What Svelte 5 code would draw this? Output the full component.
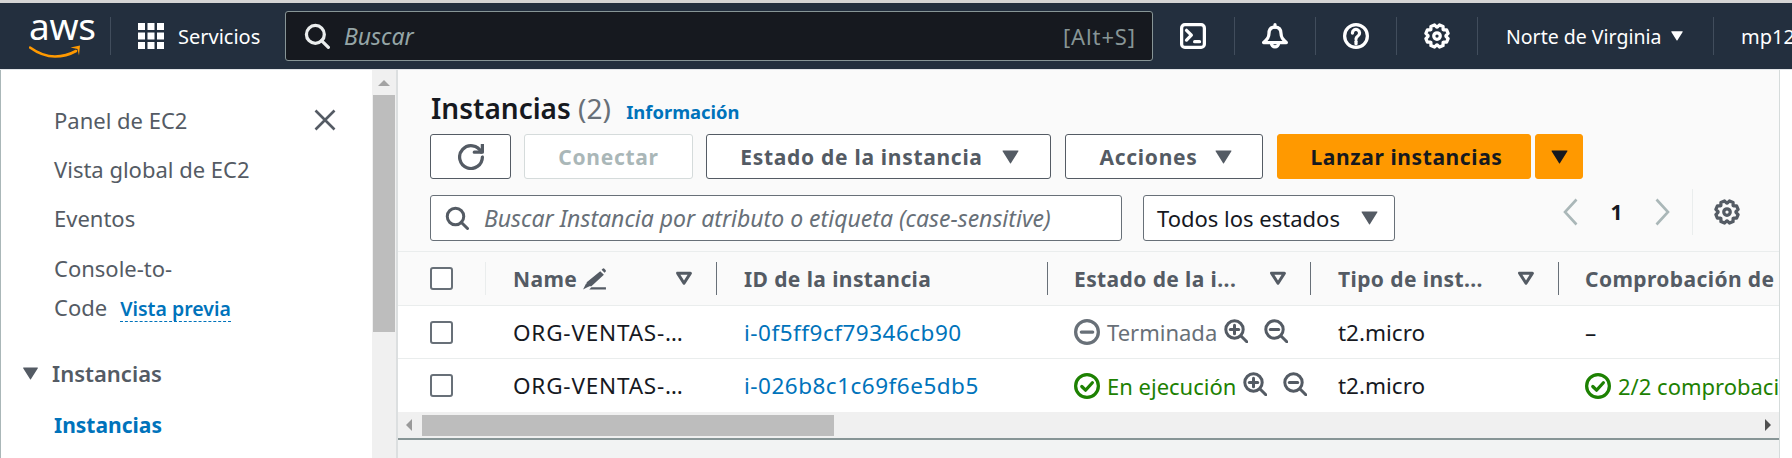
<script lang="ts">
	const rows = [
		{
			name: 'ORG-VENTAS-…',
			id: 'i-0f5ff9cf79346cb90',
			state: 'Terminada',
			stateClass: 'ended',
			checks: '–'
		},
		{
			name: 'ORG-VENTAS-…',
			id: 'i-026b8c1c69f6e5db5',
			state: 'En ejecución',
			stateClass: 'running',
			checks: '2/2 comprobaciones superadas'
		}
	];

	// eight tooth cog, same outline for both settings icons
	function gearPath(): string {
		const pts: string[] = [];
		for (let i = 0; i < 8; i++) {
			const a = (i * Math.PI) / 4 + Math.PI / 8;
			for (const [off, r] of [[-0.36, 5.5], [-0.17, 7], [0.17, 7], [0.36, 5.5]]) {
				const x = 8 + r * Math.cos(a + off);
				const y = 8 + r * Math.sin(a + off);
				pts.push(`${x.toFixed(2)} ${y.toFixed(2)}`);
			}
		}
		return 'M' + pts.join('L') + 'Z';
	}
	const gear = gearPath();
</script>

{#snippet gearIcon()}
	<svg class="ic" viewBox="0 0 16 16"><path d={gear} /><circle cx="8" cy="8" r="2" /></svg>
{/snippet}

{#snippet searchIcon()}
	<svg class="ic" viewBox="0 0 16 16"><circle cx="7" cy="7" r="5.5" /><path d="m15 15-4.2-4.2" /></svg>
{/snippet}

{#snippet caret(cls = '')}
	<svg class="caret {cls}" viewBox="0 0 16 14"><path d="M0.5 0.5h15a.5.5 0 0 1 .4.8L8.4 13.2a.5.5 0 0 1-.8 0L.1 1.3a.5.5 0 0 1 .4-.8Z" /></svg>
{/snippet}

{#snippet sortIcon()}
	<svg class="sort" viewBox="0 0 16 14"><path d="M2 2h12L8 11.5Z" /></svg>
{/snippet}

{#snippet zoomIcon(plus = false)}
	<svg class="ic zoom" viewBox="0 0 16 16">
		<circle cx="7" cy="7" r="5.8" />
		<path d="m15.2 15.2-4-4" />
		<path d="M4.2 7h5.6" />
		{#if plus}<path d="M7 4.2v5.6" />{/if}
	</svg>
{/snippet}

<div class="page">
	<header class="nav">
		<div class="logo">
			<span class="aws">aws</span>
			<svg class="smile" viewBox="0 0 52 16">
				<path class="arc" d="M1 3.5C10 10 18 12.5 26 12.5c7 0 14-1.600 21-5.500" />
				<path class="tip" d="M41.500 3.500 51 1.500 50 11.500 48.500 5Z" />
			</svg>
		</div>
		<span class="sep"></span>
		<div class="services">
			<svg class="grid-ic" viewBox="0 0 26 26">
				{#each [0, 9.5, 19] as y}
					{#each [0, 9.5, 19] as x}
						<rect {x} {y} width="7" height="7" />
					{/each}
				{/each}
			</svg>
			<span>Servicios</span>
		</div>
		<div class="nav-search">
			{@render searchIcon()}
			<span class="ph">Buscar</span>
			<span class="shortcut">[Alt+S]</span>
		</div>
		<div class="tool first">
			<svg class="ic" viewBox="0 0 16 16"><rect x="1" y="1" width="14" height="14" rx="2" /><path d="m4 4.500 3 3-3 3" /><path d="M9 11.500h3" /></svg>
		</div>
		<span class="sep"></span>
		<div class="tool">
			<svg class="ic" viewBox="0 0 16 16"><path d="M8 2.500c-2.500 0-3.700 1.700-3.700 4 0 2.300-1.300 4-3.300 5.500h14c-2-1.500-3.300-3.200-3.300-5.500 0-2.300-1.200-4-3.700-4Z" /><path d="M8 1v1.500" /><path d="M5.800 12.500a2.200 2.200 0 0 0 4.400 0" /></svg>
		</div>
		<span class="sep"></span>
		<div class="tool">
			<svg class="ic" viewBox="0 0 16 16"><circle cx="8" cy="8" r="7" /><path d="M5.800 6.200a2.200 2.200 0 1 1 3.400 1.800C8.400 8.500 8 9 8 9.800" /><path d="M8 11.300v1.500" /></svg>
		</div>
		<span class="sep"></span>
		<div class="tool">{@render gearIcon()}</div>
		<span class="sep"></span>
		<div class="region">
			<span>Norte de Virginia</span>
			{@render caret('small')}
		</div>
		<span class="sep"></span>
		<span class="user">mp12</span>
	</header>

	<div class="body">
		<aside class="side">
			<div class="side-top">
				<a class="link" href="#a">Panel de EC2</a>
				<svg class="close" viewBox="0 0 22 22"><path d="m1.500 1.500 19 19M20.500 1.500l-19 19" /></svg>
			</div>
			<a class="link" href="#a">Vista global de EC2</a>
			<a class="link events" href="#a">Eventos</a>
			<div class="link stack">
				<span>Console-to-</span>
				<span class="code">Code <span class="preview">Vista previa</span></span>
			</div>
			<div class="section">
				{@render caret('side-caret')}
				<span>Instancias</span>
			</div>
			<a class="link active" href="#a">Instancias</a>
		</aside>

		<div class="vbar">
			<svg class="arrow-up" viewBox="0 0 12 6"><path d="M6 0 12 6H0Z" /></svg>
			<div class="vthumb"></div>
		</div>

		<main class="main">
			<div class="panel">
				<h1><strong>Instancias</strong> <span class="count">(2)</span> <a class="info" href="#a">Información</a></h1>

				<div class="actions">
					<button class="btn refresh" aria-label="Actualizar">
						<svg class="ic" viewBox="0 0 16 16"><path d="M10 5h5V0" /><path d="M15 8a7 7 0 1 1-.7-3" /></svg>
					</button>
					<button class="btn connect" disabled>Conectar</button>
					<button class="btn state">Estado de la instancia {@render caret()}</button>
					<button class="btn acts">Acciones {@render caret()}</button>
					<div class="launch">
						<button class="btn primary">Lanzar instancias</button>
						<button class="btn primary more" aria-label="Más">{@render caret('dark')}</button>
					</div>
				</div>

				<div class="filters">
					<div class="filter">
						{@render searchIcon()}
						<span>Buscar Instancia por atributo o etiqueta (case-sensitive)</span>
					</div>
					<div class="select">
						<span>Todos los estados</span>
						{@render caret()}
					</div>
					<div class="pager">
						<svg class="chev" viewBox="0 0 15 28"><path d="M13.500 1.500 2 14l11.500 12.500" /></svg>
						<span class="num">1</span>
						<svg class="chev" viewBox="0 0 15 28"><path d="M1.500 1.500 13 14 1.500 26.500" /></svg>
					</div>
					<div class="pref">{@render gearIcon()}</div>
				</div>
			</div>

			<div class="table">
				<div class="row head">
					<div class="cell check"><span class="box"></span></div>
					<div class="cell th">
						Name
						<svg class="pencil" viewBox="0 0 24 21">
							<path d="M17.500 3.500 21 7 9 18H4.500V14Z M18.800 2.200l1-1a1.200 1.200 0 0 1 1.700 0l1.100 1.100a1.200 1.200 0 0 1 0 1.700l-1 1Z" />
							<path d="M1 21l3-6 3 3Z" />
							<path d="M9 19h14v2H7Z" />
						</svg>
						<span class="end">{@render sortIcon()}</span>
					</div>
					<div class="cell th">ID de la instancia</div>
					<div class="cell th tight">Estado de la i... <span class="end">{@render sortIcon()}</span></div>
					<div class="cell th">Tipo de inst... <span class="end">{@render sortIcon()}</span></div>
					<div class="cell th tight">Comprobación de estado</div>
				</div>
				{#each rows as r}
					<div class="row">
						<div class="cell check"><span class="box"></span></div>
						<div class="cell name">{r.name}</div>
						<div class="cell"><a class="id" href="#a">{r.id}</a></div>
						<div class="cell tight status {r.stateClass}">
							{#if r.stateClass === 'ended'}
								<svg class="ic st" viewBox="0 0 16 16"><circle cx="8" cy="8" r="7" /><path d="M4.500 8h7" /></svg>
							{:else}
								<svg class="ic st" viewBox="0 0 16 16"><circle cx="8" cy="8" r="7" /><path d="m4.800 8.300 2.300 2.300 4.200-4.600" /></svg>
							{/if}
							<span class="st-text">{r.state}</span>
							<span class="zooms">
								{@render zoomIcon(true)}
								{@render zoomIcon(false)}
							</span>
						</div>
						<div class="cell">t2.micro</div>
						<div class="cell tight">
							{#if r.stateClass === 'running'}
								<span class="status running">
									<svg class="ic st" viewBox="0 0 16 16"><circle cx="8" cy="8" r="7" /><path d="m4.800 8.300 2.300 2.300 4.200-4.600" /></svg>
									<span class="st-text">{r.checks}</span>
								</span>
							{:else}
								{r.checks}
							{/if}
						</div>
					</div>
				{/each}
				<div class="hbar">
					<svg class="arrow-h" viewBox="0 0 6 12"><path d="M6 0v12L0 6Z" /></svg>
					<div class="hthumb"></div>
					<svg class="arrow-h right" viewBox="0 0 6 12"><path d="M0 0v12l6-6Z" /></svg>
				</div>
			</div>
			<div class="foot"></div>
		</main>
		<div class="gutter"></div>
	</div>
</div>

<style>
	:global(body) {
		margin: 0;
		background: #fff;
		font-family: 'Noto Sans', sans-serif;
	}

	.page {
		width: 1792px;
		height: 458px;
		overflow: hidden;
		display: flex;
		flex-direction: column;
		border-top: 3px solid #d5d5d5;
		box-sizing: border-box;
	}

	a { text-decoration: none; color: inherit; }

	.ic {
		width: 26px;
		height: 26px;
		fill: none;
		stroke: currentColor;
		stroke-width: 2;
		stroke-linejoin: round;
		stroke-linecap: round;
		flex-shrink: 0;
		display: block;
	}

	.caret {
		width: 17px;
		height: 14px;
		fill: currentColor;
		flex-shrink: 0;
		display: inline-block;
	}
	.caret.small { width: 14px; height: 10px; }
	.caret.side-caret { width: 17px; height: 13px; }
	.caret.dark { color: #16191f; }

	/* top nav */
	.nav {
		height: 67px;
		flex-shrink: 0;
		background: #232f3e;
		color: #fff;
		display: flex;
		align-items: center;
		white-space: nowrap;
		overflow: hidden;
		font-size: 20px;
		border-bottom: 1px solid #e2e5e8;
		box-sizing: border-box;
	}

	.logo {
		width: 110px;
		padding-left: 29px;
		box-sizing: border-box;
		height: 50px;
		flex-shrink: 0;
	}
	.aws {
		display: block;
		font-size: 37px;
		line-height: 40px;
		letter-spacing: -0.3px;
		margin-top: -5px;
	}
	.smile {
		display: block;
		width: 52px;
		height: 16px;
		margin-top: -2px;
	}
	.arc { fill: none; stroke: #f90; stroke-width: 2.600; stroke-linecap: round; }
	.tip { fill: #f90; }

	.sep {
		width: 1px;
		height: 38px;
		background: #414d5c;
		flex-shrink: 0;
	}

	.services {
		width: 174px;
		padding-left: 27px;
		box-sizing: border-box;
		display: flex;
		align-items: center;
		gap: 14px;
		flex-shrink: 0;
	}
	.grid-ic { width: 26px; height: 26px; fill: #fff; }

	.nav-search {
		width: 868px;
		height: 50px;
		box-sizing: border-box;
		border: 1px solid #879596;
		border-radius: 3px;
		background: #16191f;
		display: flex;
		align-items: center;
		padding: 0 16px 0 18px;
		gap: 14px;
		color: #eaeded;
		flex-shrink: 0;
	}
	.nav-search .ph { flex: 1; font-style: italic; font-size: 23px; color: #95a5a6; }
	.nav-search .shortcut { font-size: 22px; letter-spacing: 0.9px; color: #879596; }

	.tool {
		width: 80px;
		display: flex;
		justify-content: center;
		flex-shrink: 0;
	}
	.tool.first { width: 81px; padding-right: 2px; box-sizing: border-box; }

	.region {
		width: 235px;
		padding-left: 28px;
		box-sizing: border-box;
		display: flex;
		align-items: center;
		gap: 9px;
		flex-shrink: 0;
		font-size: 19.500px;
	}
	.user { padding-left: 27px; }

	/* layout */
	.body {
		flex: 1;
		display: flex;
		min-height: 0;
		border-left: 1px solid #aab7b8;
	}

	.side {
		width: 371px;
		flex-shrink: 0;
		background: #fff;
		box-sizing: border-box;
		padding: 36px 0 0 53px;
		display: flex;
		flex-direction: column;
		color: #545b64;
		font-size: 22px;
		line-height: 28px;
	}
	.link { display: block; margin-bottom: 21px; }
	.link.events { margin-bottom: 22px; }
	.side-top {
		display: flex;
		justify-content: space-between;
		align-items: flex-start;
		padding-right: 36px;
	}
	.close {
		width: 22px;
		height: 22px;
		margin-top: 3px;
		fill: none;
		stroke: #545b64;
		stroke-width: 2.600;
	}
	.stack { display: flex; flex-direction: column; gap: 11px; }
	.code { display: flex; gap: 13px; align-items: baseline; }
	.preview {
		color: #0073bb;
		font-size: 19.500px;
		font-weight: 600;
		border-bottom: 1px dashed #0073bb;
		line-height: 24px;
	}
	.section {
		display: flex;
		align-items: center;
		gap: 13px;
		margin: 16px 0 24px -32px;
		font-weight: 600;
	}
	.active { color: #0073bb; font-size: 21px; font-weight: 700; }

	.vbar {
		width: 26px;
		flex-shrink: 0;
		background: #f0f0f0;
		padding: 10px 1px 0;
		box-sizing: border-box;
		border-right: 2px solid #dcdfe0;
	}
	.arrow-up { display: block; width: 12px; height: 6px; margin: 0 auto 9px; fill: #a3a3a3; }
	.vthumb { height: 237px; background: #bdbdbd; }

	.main {
		width: 1381px;
		flex-shrink: 0;
		background: #fafafa;
		display: flex;
		flex-direction: column;
		min-width: 0;
	}

	.panel { padding: 0 0 0 32px; height: 181px; box-sizing: border-box; }

	h1 {
		margin: 0 0 0 1px;
		padding-top: 20px;
		height: 64px;
		box-sizing: border-box;
		font-size: 28px;
		line-height: 36px;
		font-weight: 400;
		color: #16191f;
		white-space: nowrap;
	}
	h1 strong { font-weight: 600; }
	.count { color: #687078; }
	.info { color: #0073bb; font-size: 18.400px; font-weight: 700; margin-left: 8px; }

	.actions { display: flex; height: 45px; }

	.btn {
		height: 45px;
		box-sizing: border-box;
		border: 1px solid #545b64;
		border-radius: 3px;
		background: #fff;
		color: #545b64;
		font: 700 21px 'Noto Sans', sans-serif;
		letter-spacing: 0.7px;
		display: flex;
		align-items: center;
		justify-content: center;
		padding: 0;
		flex-shrink: 0;
	}
	.refresh { width: 81px; margin-right: 13px; }
	.connect {
		width: 169px;
		margin-right: 13px;
		border-color: #d5dbdb;
		color: #aab7b8;
	}
	.state { width: 345px; margin-right: 14px; gap: 19px; padding-left: 2px; }
	.acts { width: 198px; margin-right: 14px; gap: 18px; padding-left: 4px; }
	.launch { display: flex; gap: 4px; }
	.primary { width: 254px; background: #f90; border-color: #f90; color: #16191f; padding-left: 5px; letter-spacing: 0.6px; }
	.more { width: 48px; padding-left: 0; }

	.filters {
		display: flex;
		margin-top: 16px;
		height: 46px;
	}
	.filter {
		width: 692px;
		box-sizing: border-box;
		border: 1px solid #687078;
		border-radius: 3px;
		background: #fff;
		display: flex;
		align-items: center;
		gap: 15px;
		padding-left: 14px;
		font-style: italic;
		font-size: 23px;
		color: #687078;
		margin-right: 21px;
		flex-shrink: 0;
		white-space: nowrap;
	}
	.filter .ic { color: #545b64; width: 24px; height: 24px; }
	.select {
		width: 252px;
		box-sizing: border-box;
		border: 1px solid #687078;
		border-radius: 3px;
		background: #fff;
		display: flex;
		align-items: center;
		justify-content: space-between;
		padding: 0 16px 0 13px;
		font-size: 22px;
		color: #16191f;
		flex-shrink: 0;
	}
	.select .caret { color: #545b64; }
	.pager {
		margin-left: 168px;
		width: 129px;
		display: flex;
		align-items: center;
		justify-content: space-between;
		padding-right: 22px;
		box-sizing: border-box;
		margin-top: -6px;
		height: 46px;
		flex-shrink: 0;
	}
	.chev { width: 15px; height: 28px; fill: none; stroke: #aab7b8; stroke-width: 2.600; }
	.num { font-size: 21px; font-weight: 700; color: #16191f; }
	.pref {
		border-left: 1px solid #eaeded;
		height: 46px;
		margin-top: -6px;
		padding-left: 21px;
		display: flex;
		align-items: center;
		color: #545b64;
	}

	/* table */
	.table {
		border-top: 1px solid #eaeded;
		overflow: hidden;
	}
	.row {
		display: grid;
		grid-template-columns: 87px 231px 331px 263px 248px 221px;
		height: 53px;
		background: #fff;
		border-bottom: 1px solid #eaeded;
		box-sizing: border-box;
		font-size: 22.500px;
		color: #16191f;
		white-space: nowrap;
	}
	.row.head {
		height: 54px;
		background: #fafafa;
		color: #545b64;
		font-weight: 700;
		font-size: 21px;
		letter-spacing: 0.4px;
	}
	.row:nth-child(3) { border-bottom: none; }

	.cell {
		display: flex;
		align-items: center;
		padding-left: 28px;
		min-width: 0;
		overflow: hidden;
		box-sizing: border-box;
	}
	.cell.tight { padding-left: 27px; }
	.cell.check { padding-left: 32px; }
	.cell.name { letter-spacing: 0.8px; }
	.th { position: relative; }
	.th::before {
		content: '';
		position: absolute;
		left: 0;
		top: 10px;
		bottom: 10px;
		width: 1px;
		background: #687078;
	}
	.row.head .cell:nth-child(2)::before { background: #eaeded; }
	.end { margin-left: auto; margin-right: 23px; display: flex; }

	.box {
		width: 23px;
		height: 23px;
		box-sizing: border-box;
		border: 2px solid #687078;
		border-radius: 3px;
		background: #fff;
	}
	.pencil { width: 25px; height: 23px; fill: #545b64; margin-left: 5px; }
	.sort {
		width: 18px;
		height: 15px;
		fill: none;
		stroke: #545b64;
		stroke-width: 2.800;
		stroke-linejoin: round;
	}
	.id { color: #0073bb; letter-spacing: 0.5px; }

	.status { display: flex; align-items: center; font-size: 22px; }
	.status.ended { color: #687078; }
	.status.running { color: #1d8102; }
	.st { width: 26px; height: 26px; margin-right: 7px; }
	.st-text { flex-shrink: 0; }

	.zooms { display: flex; gap: 16px; margin-left: 7px; color: #545b64; margin-top: -3px; }
	.zoom { width: 24px; height: 24px; }

	.hbar {
		height: 26px;
		background: #f0f0f0;
		display: flex;
		align-items: center;
		border-bottom: 2px solid #879596;
	}
	.arrow-h { width: 6px; height: 12px; fill: #9a9a9a; margin-left: 8px; flex-shrink: 0; }
	.arrow-h.right { margin-left: auto; margin-right: 8px; fill: #505050; }
	.hthumb { width: 412px; height: 21px; background: #bdbdbd; margin-left: 10px; }

	.foot { flex: 1; background: #f2f3f3; }

	.gutter {
		flex: 1;
		background: #fff;
		border-left: 1px solid #d5dbdb;
	}
</style>
